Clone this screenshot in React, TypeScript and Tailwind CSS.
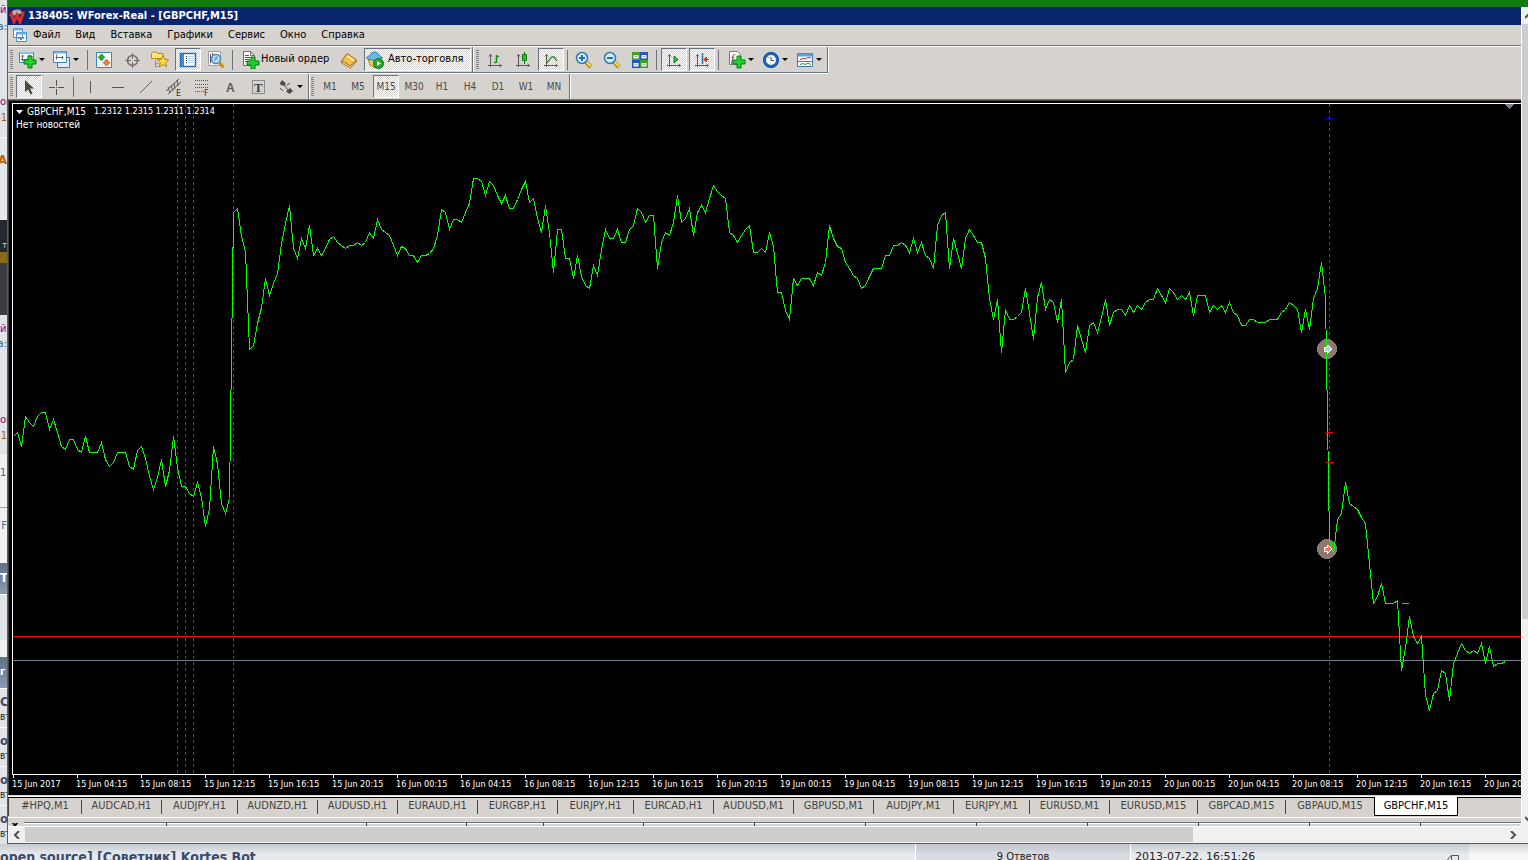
import React from 'react';
import clsx from 'clsx';

const MENU = ['Файл', 'Вид', 'Вставка', 'Графики', 'Сервис', 'Окно', 'Справка'];
const PERIODS = ['M1', 'M5', 'M15', 'M30', 'H1', 'H4', 'D1', 'W1', 'MN'];

const DATES = [
  '15 Jun 2017', '15 Jun 04:15', '15 Jun 08:15', '15 Jun 12:15', '15 Jun 16:15', '15 Jun 20:15',
  '16 Jun 00:15', '16 Jun 04:15', '16 Jun 08:15', '16 Jun 12:15', '16 Jun 16:15', '16 Jun 20:15',
  '19 Jun 00:15', '19 Jun 04:15', '19 Jun 08:15', '19 Jun 12:15', '19 Jun 16:15', '19 Jun 20:15',
  '20 Jun 00:15', '20 Jun 04:15', '20 Jun 08:15', '20 Jun 12:15', '20 Jun 16:15', '20 Jun 20:15',
];

const TABS: [string, string][] = [
  ['#HPQ,M1', 'w-[73px]'], ['AUDCAD,H1', 'w-[80px]'], ['AUDJPY,H1', 'w-[76px]'], ['AUDNZD,H1', 'w-[80px]'],
  ['AUDUSD,H1', 'w-[80px]'], ['EURAUD,H1', 'w-[80px]'], ['EURGBP,H1', 'w-[80px]'], ['EURJPY,H1', 'w-[76px]'],
  ['EURCAD,H1', 'w-[80px]'], ['AUDUSD,M1', 'w-[80px]'], ['GBPUSD,M1', 'w-[80px]'], ['AUDJPY,M1', 'w-[80px]'],
  ['EURJPY,M1', 'w-[76px]'], ['EURUSD,M1', 'w-[80px]'], ['EURUSD,M15', 'w-[88px]'], ['GBPCAD,M15', 'w-[88px]'],
  ['GBPAUD,M15', 'w-[88px]'],
];

const COLUMNS = [
  'w-[143px]', 'w-[200px]', 'w-[100px]', 'w-[77px]', 'w-[100px]', 'w-[111px]', 'w-[111px]',
  'w-[111px]', 'w-[111px]', 'w-[111px]', 'w-[111px]', 'w-[111px]',
];

// close price of every bar, one bar each 4px
const CLOSES = [
  332, 328, 342, 312, 318, 322, 312, 308, 308, 325, 315, 328, 342, 345, 335, 335, 345, 348, 332, 348,
  348, 348, 338, 355, 362, 358, 348, 348, 348, 362, 365, 346, 342, 354, 372, 385, 373, 355, 382, 366,
  332, 363, 382, 382, 389, 392, 378, 393, 422, 404, 342, 359, 399, 409, 394, 108, 104, 132, 147, 245,
  241, 219, 203, 174, 191, 179, 169, 139, 119, 101, 144, 154, 134, 144, 121, 151, 144, 151, 144, 135,
  132, 138, 141, 144, 141, 141, 138, 141, 138, 128, 134, 115, 125, 128, 131, 141, 151, 142, 144, 151,
  151, 158, 151, 151, 149, 144, 131, 105, 108, 125, 115, 115, 118, 108, 99, 74, 74, 77, 91, 77,
  81, 91, 99, 91, 104, 104, 95, 85, 77, 98, 94, 114, 128, 101, 129, 168, 125, 125, 154, 154,
  174, 151, 172, 181, 184, 161, 171, 145, 125, 134, 134, 125, 138, 138, 125, 121, 104, 108, 118, 111,
  111, 164, 138, 128, 131, 118, 91, 118, 114, 104, 131, 108, 101, 108, 94, 81, 87, 91, 94, 128,
  131, 138, 131, 125, 121, 148, 148, 144, 148, 128, 142, 188, 188, 206, 215, 174, 181, 174, 174, 174,
  181, 168, 171, 158, 121, 134, 142, 144, 158, 164, 171, 174, 184, 181, 172, 164, 164, 164, 151, 151,
  141, 141, 138, 141, 148, 134, 148, 138, 151, 154, 164, 121, 111, 108, 164, 134, 149, 164, 134, 125,
  131, 138, 138, 154, 194, 215, 195, 248, 205, 215, 215, 212, 208, 184, 209, 235, 193, 178, 205, 195,
  198, 218, 195, 268, 258, 255, 221, 235, 248, 221, 218, 228, 213, 195, 221, 208, 205, 205, 211, 201,
  208, 201, 205, 198, 195, 195, 184, 191, 198, 184, 188, 195, 191, 195, 188, 211, 191, 191, 191, 208,
  201, 205, 201, 208, 198, 208, 211, 221, 221, 215, 215, 218, 218, 218, 215, 215, 215, 208, 205, 198,
  201, 205, 228, 205, 225, 194, 184, 158, 194, 436, 449, 415, 409, 378, 399, 402, 405, 413, 419, 459,
  499, 492, 479, 499, 499, 499, 496, 566, 543, 512, 532, 539, 532, 591, 606, 589, 586, 566, 569, 596,
  559, 549, 539, 546, 549, 546, 549, 539, 559, 542, 562, 559, 559, 557,
];

const Svg: React.FC<{ w?: number; children: React.ReactNode }> = ({ w = 18, children }) => (
  <svg width={w} height={18} viewBox={`0 0 ${w} 18`} fill="none" className="shrink-0">{children}</svg>
);

const Plus = ({ x, y }: { x: number; y: number }) => (
  <path d={`M${x + 4} ${y}h4v4h4v4h-4v4h-4v-4h-4v-4h4z`} fill="#1bd32b" stroke="#087a10" />
);

const NewChartIcon = () => (
  <Svg>
    <path d="M.5 1.500h14v10h-14z" fill="#fff" stroke="#3b86bd" />
    <path d="M1 2h13" stroke="#8cc0e6" strokeWidth="2" />
    <path d="M3.500 4v6M2 8.500h7M2.500 5.500l1-1.500 1 1.500M9.500 4.500h2" stroke="#4d6f8c" />
    <Plus x={5} y={5} />
  </Svg>
);

const ProfilesIcon = () => (
  <Svg>
    <path d="M4.500 6.500h12v10h-12z" fill="#d8ecfa" stroke="#3b79b0" />
    <path d="M.5.5h13v11h-13z" fill="#fff" stroke="#3b86bd" />
    <path d="M1 1.500h12" stroke="#6eaee0" strokeWidth="2" />
    <path d="M3.500 3.500v5M2.500 6.500h8M9.500 5v3" stroke="#4d6f8c" />
  </Svg>
);

const MarketIcon = () => (
  <Svg>
    <path d="M1.500 1.500h15v15h-15z" fill="#fff" stroke="#3b86bd" />
    <path d="M3 14h12M3 11h12" stroke="#cfe2f0" />
    <path d="M6.500 3l3.500 3.500H8v2.500H5V6.500H3z" fill="#25b32b" stroke="#0b7411" strokeWidth=".7" />
    <path d="M11.500 15l-3.500-3.500h2V9h3v2.500h2z" fill="#ff8142" stroke="#c03c0a" strokeWidth=".7" />
  </Svg>
);

const DataIcon = () => (
  <Svg>
    <circle cx="9.500" cy="9.500" r="5" stroke="#6b6b6b" strokeWidth="1.500" />
    <path d="M9.500 2v6M9.500 11v6M2 9.500h6M11 9.500h6" stroke="#6b6b6b" />
  </Svg>
);

const FolderStarIcon = () => (
  <Svg>
    <path d="M.5 2.500l1-1.500h4l1 1.500h5.500v5H.5z" fill="#ffe27a" stroke="#b58a17" />
    <path d="M4.500 9v7M4.500 12.500h3M4.500 15.500h3" stroke="#666" strokeDasharray="1 1" />
    <path d="M12 4.500l1.700 3.800 4 .5-3 2.800.9 4.100-3.600-2.100-3.600 2.100.9-4.100-3-2.800 4-.5z" fill="#ffd83d" stroke="#b9860b" />
  </Svg>
);

const TerminalIcon = () => (
  <Svg>
    <path d="M1.500 2.500h15v13h-15z" fill="#fff" stroke="#2d6fb3" strokeWidth="1.500" />
    <path d="M2 3h3v12H2z" fill="#3f8ad0" />
    <path d="M7 5.500h1M7 7.500h1M7 9.500h1M7 11.500h1" stroke="#335" />
    <path d="M9 5.500h6M9 7.500h6M9 9.500h6M9 11.500h6" stroke="#b7d2ea" />
  </Svg>
);

const TesterIcon = () => (
  <Svg>
    <path d="M1.500.5h12v14h-12z" fill="#f7f7f2" stroke="#9aa0a6" />
    <path d="M3.500 3v9M5.500 2v3" stroke="#557" />
    <path d="M12.500 12l4 4.500" stroke="#c8901a" strokeWidth="3" />
    <circle cx="9" cy="8" r="4.500" fill="#bfe0f7" fillOpacity=".85" stroke="#4c86b8" strokeWidth="1.500" />
    <path d="M8 6v4M10 5v4" stroke="#4c86b8" />
  </Svg>
);

const NewOrderIcon = () => (
  <Svg>
    <path d="M1.500.5h7l4 4v10h-11z" fill="#fff" stroke="#6d6d6d" />
    <path d="M8.500.5v4h4" stroke="#6d6d6d" />
    <path d="M3 4.500h4M3 6.500h7M3 8.500h5M3 10.500h4" stroke="#555" />
    <Plus x={5} y={6} />
  </Svg>
);

const BookIcon = () => (
  <Svg>
    <path d="M1.500 10l5.500-7.500 9.500 6.500-6 6z" fill="#f2c04c" stroke="#a8690c" />
    <path d="M1.500 10v2l9 5 6-6.500V9l-6 6z" fill="#fff2c9" stroke="#a8690c" />
    <path d="M7.500 5l6.500 4.500" stroke="#ffe7a3" strokeWidth="2" />
  </Svg>
);

const RobotIcon = () => (
  <Svg>
    <path d="M2 8h13l-1 6-5 3-5-3z" fill="#f6cf52" stroke="#b5850f" />
    <path d="M.5 7c1-2 3-2 4-3 0-4 8-4 8 0 1 1 3 1 4 3-3 3-13 3-16 0z" fill="#66b6e6" stroke="#2f7cb1" />
    <circle cx="12.500" cy="12.500" r="5" fill="#22a82b" stroke="#0c7414" />
    <path d="M11 10l4 2.500-4 2.500z" fill="#fff" />
  </Svg>
);

const Axes = () => (
  <path d="M4.500 3v13M2 14.500h14M3 5.500l1.500-2 1.500 2M13.500 13l2 1.500-2 1.500" stroke="#5a5a5a" />
);

const BarsIcon = () => (
  <Svg><Axes /><path d="M10.500 4v8M8 11.500h2M11 5.500h2" stroke="#138a1a" strokeWidth="1.500" /></Svg>
);

const CandlesIcon = () => (
  <Svg>
    <Axes />
    <path d="M10.500 1v12" stroke="#0a7a10" />
    <path d="M8.500 3.500h4v6h-4z" fill="#1cc92a" stroke="#0a7a10" />
  </Svg>
);

const LineIcon = () => (
  <Svg><Axes /><path d="M5 12l3-4 2-2h2l3 4" stroke="#2f8f36" strokeWidth="1.300" /></Svg>
);

const ZoomIcon = ({ plus }: { plus?: boolean }) => (
  <Svg>
    <path d="M11 11l5 5" stroke="#b37d12" strokeWidth="4" />
    <path d="M11.500 11l4.500 4.500" stroke="#ffdf66" strokeWidth="2" />
    <circle cx="7" cy="7" r="5.500" fill="#d3ecfb" stroke="#2f7ab5" strokeWidth="1.500" />
    <path d={plus ? 'M4 7h6M7 4v6' : 'M4 7h6'} stroke="#2a6ea8" strokeWidth="2" />
  </Svg>
);

const TileIcon = () => (
  <Svg>
    <path d="M1 1h8v8H1zM9 9h8v8H9z" fill="#3ba51e" />
    <path d="M9 1h8v8H9zM1 9h8v8H1z" fill="#2456c8" />
    <path d="M2.500 4h5v3.500h-5zM10.500 4h5v3.500h-5zM2.500 12h5v3.500h-5zM10.500 12h5v3.500h-5z" fill="#eef5ff" />
    <path d="M4 5.500h2M12 5.500h2M4 13.500h2M12 13.500h2" stroke="#8fb38a" />
  </Svg>
);

const ScrollIcon = () => (
  <Svg><Axes /><path d="M9 5l4 3.500L9 12z" fill="#2dbf38" stroke="#0f7a17" /></Svg>
);

const ShiftIcon = () => (
  <Svg>
    <Axes />
    <path d="M9.500 2v11" stroke="#2a6ea8" strokeWidth="1.500" />
    <path d="M16 8.500h-4M13.500 6l-2.500 2.500 2.500 2.500z" fill="#c9300c" stroke="#c9300c" />
  </Svg>
);

const IndicatorIcon = () => (
  <Svg>
    <path d="M1.500.5h8l3 3v10h-11z" fill="#fff" stroke="#7a7a7a" />
    <text x="3" y="11" fontSize="11" fontFamily="Liberation Serif, serif" fontStyle="italic" fill="#333">f</text>
    <Plus x={5} y={5} />
  </Svg>
);

const ClockIcon = () => (
  <Svg>
    <circle cx="9" cy="9" r="6.500" fill="#f4faff" stroke="#1767c2" strokeWidth="3" />
    <path d="M9 6v3.500h3M5.500 5.500l1 1" stroke="#444" />
    <circle cx="9" cy="9" r="7.500" stroke="#0c4688" strokeWidth=".7" />
  </Svg>
);

const TemplateIcon = () => (
  <Svg>
    <path d="M1.500 2.500h15v13h-15z" fill="#fff" stroke="#3b79b0" />
    <path d="M2 4h14" stroke="#5ca0dc" strokeWidth="3" />
    <path d="M2 10.500h14" stroke="#3b79b0" />
    <path d="M4 8.500l3-1 2 .5 3-1.500 3 .5" stroke="#a3361b" />
    <path d="M4 13.500l3-1 2 1 3-1.500 3 1.500" stroke="#2c8f34" />
  </Svg>
);

const ArrowCursorIcon = () => (
  <Svg><path d="M5 2v12l3-2.500 2.500 5 2-1L10 10.500h4z" fill="#4a4a4a" /></Svg>
);
const CrossIcon = () => (
  <Svg><path d="M8.500 2v6M8.500 11v6M1 9.500h6M10 9.500h6M8 9.500h1" stroke="#555" /></Svg>
);
const VLineIcon = () => <Svg><path d="M9.500 3v12" stroke="#555" /></Svg>;
const HLineIcon = () => <Svg><path d="M3 9.500h12" stroke="#555" /></Svg>;
const TrendIcon = () => <Svg><path d="M3 15L15 3" stroke="#666" /></Svg>;

const ChannelIcon = () => (
  <Svg>
    <path d="M1 13L14 1M3 16L16 4M3 9l2 6M6 7l2 6M9 5l1 6M12 2l1 6" stroke="#555" />
    <text x="11" y="18" fontSize="8" fontFamily="DejaVu Sans" fill="#333">E</text>
  </Svg>
);

const FiboIcon = () => (
  <Svg>
    <path d="M2 2.500h14M2 6.500h14M2 9.500h14M2 13.500h9" stroke="#555" strokeDasharray="1 1" />
    <text x="11" y="18" fontSize="8" fontFamily="DejaVu Sans" fill="#333">F</text>
  </Svg>
);

const TextIcon = () => (
  <Svg><text x="5" y="14" fontSize="12" fontWeight="bold" fontFamily="Liberation Sans" fill="#5a5a5a">A</text></Svg>
);

const LabelIcon = () => (
  <Svg>
    <path d="M3.500 2.500h12v13h-12z" stroke="#444" strokeDasharray="1 1" />
    <text x="5" y="14" fontSize="13" fontWeight="bold" fontFamily="Liberation Serif, serif" fill="#444">T</text>
  </Svg>
);

const ArrowsIcon = () => (
  <Svg>
    <path d="M5 2l4 3.500L6.500 8 2.500 6zM13 10l3 3-3.500 3L9 13.500z" fill="#4d4d4d" />
    <path d="M3 10l3 3M7 7l5 6M9.500 7.500L13 5" stroke="#4d4d4d" />
  </Svg>
);

const AppIcon = () => (
  <svg width="16" height="16" viewBox="0 0 16 16" fill="none">
    <path d="M1 8a7 6.500 0 0 1 13-3z" fill="#b9b9b9" stroke="#8d8d8d" />
    <path d="M2 5l3 9 3-7 3 7 3.500-10" stroke="#e02a2a" strokeWidth="3" />
    <path d="M1 5h3M12 3.500h4" stroke="#a51212" />
  </svg>
);

const DocIcon = () => (
  <svg width="16" height="16" viewBox="0 0 16 16" fill="none">
    <path d="M1.500 1.500h9v9h-9zM4.500 5.500h10v9h-10z" fill="#fff" stroke="#4b8fd0" />
    <path d="M2 2.500h8M5 6.500h9" stroke="#6db2ea" strokeWidth="2" />
    <path d="M6 12l2-2 1 3 2-3 1 2" stroke="#2f6fb0" />
  </svg>
);

interface BtnProps {
  label: string;
  pressed?: boolean;
  drop?: boolean;
  children: React.ReactNode;
}

const PRESSED = 'border-t-gray-500 border-l-gray-500 border-r-white border-b-white bg-[repeating-conic-gradient(#ffffff_0_25%,#d6d3ce_0_50%)] bg-[length:2px_2px]';

const Btn: React.FC<BtnProps> = ({ label, pressed, drop, children }) => (
  <button
    type="button"
    aria-label={label}
    className={clsx(
      'flex h-[23px] shrink-0 items-center border',
      drop ? 'w-[34px] gap-[2px] pl-[3px]' : 'mx-px w-[26px] justify-center',
      pressed ? PRESSED : 'border-transparent',
    )}
  >
    {children}
    {drop && <Caret />}
  </button>
);

const Caret = () => (
  <svg width="6" height="4" viewBox="0 0 6 4" className="shrink-0"><path d="M0 0h6L3 3z" fill="#000" /></svg>
);

const Grip = () => (
  <span className="mx-[2px] h-5 w-[3px] shrink-0 bg-[repeating-linear-gradient(#848284_0_1px,#d6d3ce_1px_2px)]" />
);

const Sep = () => <span className="mx-[2px] h-5 w-px shrink-0 bg-gray-500" />;

const Bar: React.FC<{ children: React.ReactNode }> = ({ children }) => (
  <div className="flex h-[25px] items-center border-r border-gray-500 pr-px shadow-[1px_0_0_#fff]">{children}</div>
);

const Toolbars = () => (
  <div className="h-[52px] bg-[#d6d3ce] text-[11px] text-black">
    <div className="flex w-fit border-b border-gray-500 shadow-[0_1px_0_#fff]">
      <Bar>
        <Grip />
        <Btn label="Новый график" drop><NewChartIcon /></Btn>
        <Btn label="Профили" drop><ProfilesIcon /></Btn>
        <span className="w-[2px]" />
        <Sep />
        <Btn label="Обзор рынка"><MarketIcon /></Btn>
        <Btn label="Окно данных"><DataIcon /></Btn>
        <Btn label="Навигатор"><FolderStarIcon /></Btn>
        <Btn label="Терминал" pressed><TerminalIcon /></Btn>
        <Btn label="Тестер"><TesterIcon /></Btn>
        <Sep />
        <button type="button" className="flex h-[23px] w-[100px] items-center gap-px whitespace-nowrap pl-[7px]">
          <NewOrderIcon />
          <span>Новый ордер</span>
        </button>
        <Btn label="Редактор"><BookIcon /></Btn>
        <button type="button" className={clsx('ml-px flex h-[23px] w-[107px] items-center gap-1 whitespace-nowrap border pl-px', PRESSED)}>
          <RobotIcon />
          <span>Авто-торговля</span>
        </button>
      </Bar>
      <Bar>
        <span className="w-px" />
        <Grip />
        <Btn label="Бары"><BarsIcon /></Btn>
        <Btn label="Свечи"><CandlesIcon /></Btn>
        <Btn label="Линия" pressed><LineIcon /></Btn>
        <Sep />
        <Btn label="Приблизить"><ZoomIcon plus /></Btn>
        <Btn label="Отдалить"><ZoomIcon /></Btn>
        <Btn label="Окна плиткой"><TileIcon /></Btn>
        <Sep />
        <span className="w-px" />
        <Btn label="Автопрокрутка" pressed><ScrollIcon /></Btn>
        <Btn label="Сдвиг графика" pressed><ShiftIcon /></Btn>
        <Sep />
        <span className="w-[3px]" />
        <Btn label="Индикаторы" drop><IndicatorIcon /></Btn>
        <Btn label="Периоды" drop><ClockIcon /></Btn>
        <Btn label="Шаблоны" drop><TemplateIcon /></Btn>
      </Bar>
    </div>
    <div className="flex pt-px text-[#4a4a4a]">
      <Bar>
        <Grip />
        <Btn label="Курсор" pressed><ArrowCursorIcon /></Btn>
        <Btn label="Перекрестие"><CrossIcon /></Btn>
        <Sep />
        <Btn label="Вертикальная линия"><VLineIcon /></Btn>
        <Btn label="Горизонтальная линия"><HLineIcon /></Btn>
        <Btn label="Трендовая линия"><TrendIcon /></Btn>
        <Btn label="Канал"><ChannelIcon /></Btn>
        <Btn label="Фибоначчи"><FiboIcon /></Btn>
        <Btn label="Текст"><TextIcon /></Btn>
        <Btn label="Метка"><LabelIcon /></Btn>
        <span className="w-px" />
        <Btn label="Стрелки" drop><ArrowsIcon /></Btn>
      </Bar>
      <Bar>
        <Grip />
        {PERIODS.map(p => (
          <Btn key={p} label={p} pressed={p === 'M15'}><span className="text-[10px]">{p}</span></Btn>
        ))}
      </Bar>
    </div>
  </div>
);

const Deal: React.FC<{ y: number; fill: string }> = ({ y, fill }) => (
  <path d={`M1311 ${y - 2}h3v-2h1l4 4-4 4h-1v-2h-3z`} fill={fill} stroke="#fff" />
);

const Chart = () => {
  const line = CLOSES.map((y, i) => `${i * 4 + 0.5},${y + 0.5}`).join(' ');
  return (
    <svg className="block h-full w-full" fill="none" shapeRendering="crispEdges">
      {[164, 172, 180, 220, 1316].map(x => (
        <line key={x} x1={x + 0.5} x2={x + 0.5} y1="0" y2="100%" stroke="#e81010" strokeDasharray="3 3" />
      ))}
      <path d="M1492 0h9l-4.500 5z" fill="#708090" />
      <line x1="0" x2="100%" y1="532.5" y2="532.5" stroke="#f00" />
      <line x1="0" x2="100%" y1="556.5" y2="556.5" stroke="#708090" />
      <circle cx="1314" cy="245" r="9.500" fill="#8f7866" stroke="#708090" />
      <circle cx="1314" cy="445" r="9.500" fill="#8f7866" stroke="#708090" />
      <polyline points={line} stroke="#0f0" />
      <path d="M1313 14.500h7" stroke="#00f" />
      <path d="M1313 328.500h7M1313 358.500h7" stroke="#f00" />
      <path d="M1389 499.500h7" stroke="#ff6347" />
      <Deal y={245} fill="#add8e6" />
      <Deal y={445} fill="#ff7070" />
    </svg>
  );
};

// slice of the forum page that stays visible left of the window
const STRIP: [string, string, string][] = [
  ['h-[18px] bg-[#e0e3e8] leading-5 text-[#800080]', 'й', ''],
  ['h-[18px] justify-end bg-[#e0e3e8] leading-[18px] text-[#2b5f8a]', 'а:', ''],
  ['h-[58px] bg-[#e0e3e8]', '', ''],
  ['h-[16px] bg-[#e0e3e8] leading-4 text-[#800080]', 'ой', ''],
  ['h-[16px] justify-end bg-[#e0e3e8] leading-4 text-[#b06000]', '41', ''],
  ['h-[11px] bg-[#e0e3e8]', '', ''],
  ['h-[13px] border-t border-white bg-[#e4e8ec]', '', ''],
  ['h-[20px] justify-end bg-[#e4e8ec] leading-5 text-[#c06000]', 'А', 'font-bold text-[13px]'],
  ['h-[50px] bg-[#e4e8ec]', '', ''],
  ['h-[18px] bg-[#24292f]', '', ''],
  ['h-[14px] justify-end bg-[#24292f] leading-[14px] text-gray-300', 'т', 'text-[9px]'],
  ['h-[11px] bg-[#8a6a1c]', '', ''],
  ['h-[52px] bg-[#3a3d42]', '', ''],
  ['h-[6px] bg-[#e0e3e8]', '', ''],
  ['h-[15px] bg-[#e0e3e8] leading-[15px] text-[#800080]', 'й', ''],
  ['h-[16px] justify-end bg-[#e0e3e8] leading-4 text-[#2b5f8a]', 'а:', ''],
  ['h-[60px] bg-[#e0e3e8]', '', ''],
  ['h-[16px] bg-[#e0e3e8] leading-4 text-[#800080]', 'ой', ''],
  ['h-[15px] justify-end bg-[#e0e3e8] leading-[15px] text-[#b06000]', '41', ''],
  ['h-[11px] bg-[#e0e3e8]', '', ''],
  ['h-[11px] bg-[#f0f1f2]', '', ''],
  ['h-[16px] bg-[#f0f1f2] leading-4 text-[#3f5f95]', '1', ''],
  ['h-[26px] bg-[#f0f1f2]', '', ''],
  ['h-[11px] border-t border-gray-400 bg-[#f0f1f2]', '', ''],
  ['h-[16px] justify-end bg-[#f0f1f2] leading-4 text-[#3f6f95]', 'F', ''],
  ['h-[29px] bg-[#f0f1f2]', '', ''],
  ['h-[31px] bg-[linear-gradient(#5e7086,#8a9bb2)] leading-[30px] text-white', 'Т', 'font-bold text-[13px]'],
  ['h-[46px] border-t border-white bg-[#e0e3e8]', '', ''],
  ['h-[17px] bg-[#f0f1f2]', '', ''],
  ['h-[31px] bg-[linear-gradient(#5e7086,#8a9bb2)] leading-[30px] text-white', 'г', 'font-bold'],
  ['h-[22px] border-t border-white bg-[#e0e3e8] leading-[25px] text-[#3b4a6b]', 'С', 'font-bold text-[13px]'],
  ['h-[17px] bg-[#e0e3e8] leading-[13px]', 'вт', 'text-[10px]'],
  ['h-[22px] border-t border-white bg-[#e0e3e8] leading-[25px] text-[#3b4a6b]', 'о', 'font-bold text-[13px]'],
  ['h-[17px] bg-[#e0e3e8] leading-[13px]', 'вт', 'text-[10px]'],
  ['h-[22px] border-t border-white bg-[#e0e3e8] leading-[25px] text-[#3b4a6b]', 'о', 'font-bold text-[13px]'],
  ['h-[17px] bg-[#e0e3e8] leading-[13px]', 'вт', 'text-[10px]'],
  ['h-[22px] border-t border-white bg-[#e0e3e8] leading-[25px] text-[#3b4a6b]', 'о', 'font-bold text-[13px]'],
  ['h-[17px] bg-[#e0e3e8] leading-[13px]', 'вт', 'text-[10px]'],
];

const Strip = () => (
  <div className="w-[7px] shrink-0 overflow-hidden text-[11px] text-[#222]">
    {STRIP.map(([box, text, font], i) => (
      <div key={i} className={clsx('flex', box)}>
        <span className={font}>{text}</span>
      </div>
    ))}
  </div>
);

const BottomPage = () => (
  <div className="flex h-4 shrink-0 overflow-hidden bg-[linear-gradient(#c4c9ce,#e6eaee_10px)] text-[11px] leading-[26px] text-[#222]">
    <a href="#" className="w-[915px] shrink-0 whitespace-nowrap text-[14px] font-bold text-[#3b4a6b]">
      open source] [Советник] Kortes Bot
    </a>
    <div className="w-[216px] shrink-0 border-x border-white bg-[linear-gradient(#c0c2c8,#dadce4_10px)] text-center">9 Ответов</div>
    <div className="flex w-[338px] shrink-0 items-start justify-between pl-1 pr-[10px] font-['DejaVu_Sans']">
      2013-07-22, 16:51:26
      <svg width="12" height="6" viewBox="0 0 12 6" fill="none" className="mt-[11px]"><path d="M4.500 6V.5h7V6M0 5.500l4-5" stroke="#556" /></svg>
    </div>
    <div className="flex-1 bg-[linear-gradient(#d5d5d5,#f6f6f6_10px)]" />
  </div>
);

const MdiTabs = () => (
  <div className="flex h-[21px] shrink-0 items-start border-b border-t border-b-white border-t-black bg-[#d6d3ce] text-[11px] text-[#444]">
    <span className="h-[18px] w-px shrink-0 bg-[#444]" />
    {TABS.map(([name, width], i) => (
      <button
        key={name}
        type="button"
        className={clsx('flex h-[17px] shrink-0 items-center justify-center', width)}
      >
        <span className="flex-1 text-center">{name}</span>
        {i < TABS.length - 1 && <span className="h-[14px] w-px bg-[#444]" />}
      </button>
    ))}
    <button type="button" className="-mt-px h-[19px] w-[84px] shrink-0 border border-t-0 border-black bg-white leading-[18px] text-black">
      GBPCHF,M15
    </button>
  </div>
);

const Chevron = ({ d }: { d: string }) => (
  <svg width="8" height="8" viewBox="0 0 8 8" fill="none"><path d={d} stroke="#505050" strokeWidth="2" /></svg>
);

export default function App() {
  return (
    <div className="flex h-screen flex-col overflow-hidden font-['DejaVu_Sans_Condensed','DejaVu_Sans',sans-serif]">
      <div className="flex min-h-0 flex-1">
        <Strip />
        <div className="flex min-w-0 flex-1 flex-col border-b border-l border-[#2a8030]">
          <div className="h-[7px] shrink-0 bg-[#107c10]" />
          <div className="flex min-h-0 flex-1">
            <div className="flex min-w-0 flex-1 flex-col">
              <header className="flex h-[18px] shrink-0 items-center gap-[3px] bg-[#08246b] pl-px text-[11px] font-bold text-white">
                <AppIcon />
                <h1>138405: WForex-Real - [GBPCHF,M15]</h1>
              </header>
              <nav className="flex h-[21px] shrink-0 items-center border-b border-gray-500 bg-[#d6d3ce] pl-1 text-[11px] text-black">
                <DocIcon />
                {MENU.map((m, i) => (
                  <button key={m} type="button" className={clsx('pr-2', i === 0 ? 'pl-[5px]' : 'pl-[7px]')}>{m}</button>
                ))}
              </nav>
              <div className="shrink-0 border-b border-t border-b-gray-500 border-t-white bg-[#d6d3ce]"><Toolbars /></div>

              <main className="flex min-h-0 flex-1 flex-col border-l border-t border-[#424142] bg-black pl-[3px] pt-[2px]">
                <div className="relative min-h-0 flex-1 border border-r-0 border-white">
                  <Chart />
                  <div className="absolute left-[3px] top-px text-[10px] leading-[13px] text-white">
                    <div className="flex items-center gap-1">
                      <svg width="7" height="4" viewBox="0 0 7 4"><path d="M0 0h7L3.500 4z" fill="#fff" /></svg>
                      <span>GBPCHF,M15</span>
                      <span className="pl-1 text-[9px]">1.2312 1.2315 1.2311 1.2314</span>
                    </div>
                    <div>Нет новостей</div>
                  </div>
                </div>
                <div className="flex h-5 shrink-0 overflow-hidden text-[9px] text-white">
                  {DATES.map(d => (
                    <div key={d} className="w-16 shrink-0 whitespace-nowrap">
                      <div className="ml-px h-[3px] w-px bg-white" />
                      <div className="leading-[12px]">{d}</div>
                    </div>
                  ))}
                </div>
              </main>

              <div className="h-[2px] shrink-0 border-b border-white bg-[#d6d3ce]" />
              <MdiTabs />
              <div className="flex h-[9px] shrink-0 items-end overflow-hidden border-b border-white bg-[#d6d3ce] pl-1">
                <svg width="6" height="3" viewBox="0 0 6 3" className="mr-[6px]"><path d="M0 0h2l1 1 1-1h2L4 3H2z" fill="#000" /></svg>
                {COLUMNS.map((w, i) => (
                  <div key={i} className={clsx('h-[4px] shrink-0 border-r border-t border-r-[#424142] border-t-gray-500 shadow-[inset_0_1px_0_#fff]', w)} />
                ))}
                <div className="h-[4px] flex-1 border-t border-gray-500 shadow-[inset_0_1px_0_#fff]" />
              </div>
            </div>

            <div className="flex w-[7px] shrink-0 flex-col border-l border-white bg-[#f0f0f0]">
              <button type="button" aria-label="Вверх" className="h-[17px] shrink-0 overflow-hidden pl-[3px]"><Chevron d="M0 6l4-4 4 4" /></button>
              <div className="h-[595px] shrink-0 bg-[#cdcdcd]" />
              <div className="flex-1" />
              <button type="button" aria-label="Вниз" className="h-[17px] shrink-0 overflow-hidden pl-[3px]"><Chevron d="M0 2l4 4 4-4" /></button>
            </div>
          </div>

          <div className="flex h-4 shrink-0 bg-[#f0f0f0] pr-[7px]">
            <button type="button" aria-label="Влево" className="flex w-[17px] shrink-0 items-center justify-center"><Chevron d="M6 0L2 4l4 4" /></button>
            <div className="flex-1"><div className="h-[15px] w-[79%] bg-[#cdcdcd]" /></div>
            <button type="button" aria-label="Вправо" className="flex w-[17px] shrink-0 items-center justify-center"><Chevron d="M2 0l4 4-4 4" /></button>
          </div>
        </div>
      </div>
      <BottomPage />
    </div>
  );
}
